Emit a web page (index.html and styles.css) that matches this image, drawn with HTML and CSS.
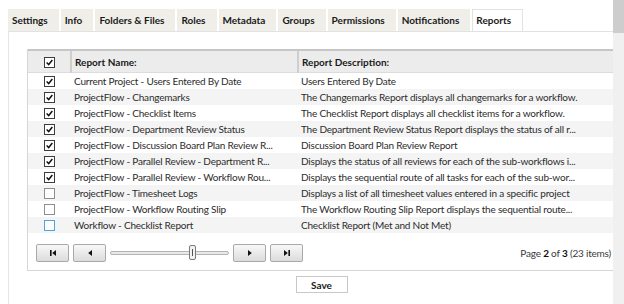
FILE: index.html
```html
<!DOCTYPE html>
<html lang="en">
<head>
    <meta charset="UTF-8">
    <title>Project Settings - Reports</title>
    <link rel="stylesheet" href="styles.css">
</head>
<body>
    <div class="window">
        <div class="main">
            <div class="tabs">
                <div class="tab">Settings</div>
                <div class="tab">Info</div>
                <div class="tab">Folders &amp; Files</div>
                <div class="tab">Roles</div>
                <div class="tab">Metadata</div>
                <div class="tab">Groups</div>
                <div class="tab">Permissions</div>
                <div class="tab">Notifications</div>
                <div class="tab active">Reports</div>
            </div>

            <div class="panel">
                <div class="grid">
                    <table>
                        <colgroup>
                            <col class="col-sel">
                            <col class="col-name">
                            <col>
                        </colgroup>
                        <thead>
                            <tr>
                                <th class="sel"><span class="cb checked"><svg viewBox="0 0 11 11"><polyline points="2,5.5 4.5,8 9,2.5"/></svg></span></th>
                                <th>Report Name:</th>
                                <th>Report Description:</th>
                            </tr>
                        </thead>
                        <tbody>
                            <tr>
                                <td class="sel"><span class="cb checked"><svg viewBox="0 0 11 11"><polyline points="2,5.5 4.5,8 9,2.5"/></svg></span></td>
                                <td>Current Project - Users Entered By Date</td>
                                <td>Users Entered By Date</td>
                            </tr>
                            <tr>
                                <td class="sel"><span class="cb checked"><svg viewBox="0 0 11 11"><polyline points="2,5.5 4.5,8 9,2.5"/></svg></span></td>
                                <td>ProjectFlow - Changemarks</td>
                                <td>The Changemarks Report displays all changemarks for a workflow.</td>
                            </tr>
                            <tr>
                                <td class="sel"><span class="cb checked"><svg viewBox="0 0 11 11"><polyline points="2,5.5 4.5,8 9,2.5"/></svg></span></td>
                                <td>ProjectFlow - Checklist Items</td>
                                <td>The Checklist Report displays all checklist items for a workflow.</td>
                            </tr>
                            <tr>
                                <td class="sel"><span class="cb checked"><svg viewBox="0 0 11 11"><polyline points="2,5.5 4.5,8 9,2.5"/></svg></span></td>
                                <td>ProjectFlow - Department Review Status</td>
                                <td>The Department Review Status Report displays the status of all r...</td>
                            </tr>
                            <tr>
                                <td class="sel"><span class="cb checked"><svg viewBox="0 0 11 11"><polyline points="2,5.5 4.5,8 9,2.5"/></svg></span></td>
                                <td>ProjectFlow - Discussion Board Plan Review R...</td>
                                <td>Discussion Board Plan Review Report</td>
                            </tr>
                            <tr>
                                <td class="sel"><span class="cb checked"><svg viewBox="0 0 11 11"><polyline points="2,5.5 4.5,8 9,2.5"/></svg></span></td>
                                <td>ProjectFlow - Parallel Review - Department R...</td>
                                <td>Displays the status of all reviews for each of the sub-workflows i...</td>
                            </tr>
                            <tr>
                                <td class="sel"><span class="cb checked"><svg viewBox="0 0 11 11"><polyline points="2,5.5 4.5,8 9,2.5"/></svg></span></td>
                                <td>ProjectFlow - Parallel Review - Workflow Rou...</td>
                                <td>Displays the sequential route of all tasks for each of the sub-wor...</td>
                            </tr>
                            <tr>
                                <td class="sel"><span class="cb"></span></td>
                                <td>ProjectFlow - Timesheet Logs</td>
                                <td>Displays a list of all timesheet values entered in a specific project</td>
                            </tr>
                            <tr>
                                <td class="sel"><span class="cb"></span></td>
                                <td>ProjectFlow - Workflow Routing Slip</td>
                                <td>The Workflow Routing Slip Report displays the sequential route...</td>
                            </tr>
                            <tr>
                                <td class="sel"><span class="cb focus"></span></td>
                                <td>Workflow - Checklist Report</td>
                                <td>Checklist Report (Met and Not Met)</td>
                            </tr>
                        </tbody>
                    </table>

                    <div class="pager">
                        <button class="pbtn" title="First"><svg viewBox="0 0 8 8"><rect x="1" y="1" width="1.6" height="6"/><polygon points="7,1 7,7 3.2,4"/></svg></button>
                        <button class="pbtn" title="Previous"><svg viewBox="0 0 8 8"><polygon points="6,1 6,7 2.2,4"/></svg></button>
                        <div class="slider">
                            <div class="track"></div>
                            <div class="thumb"></div>
                        </div>
                        <button class="pbtn" title="Next"><svg viewBox="0 0 8 8"><polygon points="2,1 2,7 5.8,4"/></svg></button>
                        <button class="pbtn" title="Last"><svg viewBox="0 0 8 8"><polygon points="1,1 1,7 4.8,4"/><rect x="5.4" y="1" width="1.6" height="6"/></svg></button>
                        <div class="page-info">Page <b>2</b> of <b>3</b> (23 items)</div>
                    </div>
                </div>

                <div class="actions">
                    <button class="save">Save</button>
                </div>
            </div>
        </div>
        <div class="scrollbar"><div class="scroll-thumb"></div></div>
    </div>
</body>
</html>
```

FILE: styles.css
```css
body {
    margin: 0;
    font-family: 'Lato', 'Noto Sans', sans-serif;
    font-size: 10px;
    letter-spacing: -0.2px;
    color: #2c2c2c;
    background-color: #fff;
}
.window {
    display: flex;
    height: 304px;
    overflow: hidden;
}
.main {
    flex: 1;
    min-width: 0;
    overflow: hidden;
}
.scrollbar {
    width: 11px;
    background-color: #f0f0f0;
}
.scroll-thumb {
    height: 33px;
    background-color: #cdcdcd;
}

/* tabs */
.tabs {
    display: flex;
    gap: 2px;
    padding: 9px 0 0 8px;
}
.tab {
    height: 22px;
    line-height: 22px;
    padding: 0 11px 0 4px;
    background-color: #efeee9;
    font-weight: bold;
    letter-spacing: 0;
    color: #1a1a1a;
    white-space: nowrap;
}
.tab.active {
    background-color: #fff;
    border: 1px solid #e2e2e2;
    border-bottom: none;
    height: 21px;
    line-height: 20px;
    padding: 0 11px 0 3px;
}
.panel {
    margin-left: 8px;
    border-left: 1px solid #e6e6e6;
    border-top: 1px solid #e2e2e2;
    padding: 17px 0 0 18px;
    height: 300px;
}

/* grid */
.grid {
    width: 591px;
    border-left: 1px solid #d6d6d6;
    border-bottom: 1px solid #d6d6d6;
}
table {
    width: 100%;
    border-collapse: collapse;
    table-layout: fixed;
}
.col-sel {
    width: 43px;
}
.col-name {
    width: 227px;
}
th {
    height: 21px;
    padding: 0 3px;
    background-color: #ececec;
    border-top: 2px solid #c6c6c6;
    border-bottom: 1px solid #dcdcdc;
    text-align: left;
    font-weight: bold;
    letter-spacing: 0;
    color: #1a1a1a;
}
th + th {
    border-left: 2px solid #cfcfcf;
}
td {
    height: 16px;
    padding: 0 3px;
    white-space: nowrap;
    overflow: hidden;
    text-overflow: ellipsis;
    line-height: 15px;
}
tbody tr:nth-child(even) td {
    background-color: #f4f4f4;
}
.sel {
    text-align: center;
    padding: 0;
}
.cb {
    display: inline-block;
    width: 11px;
    height: 11px;
    box-sizing: border-box;
    border: 1px solid #8e8e8e;
    background-color: #fff;
    vertical-align: middle;
}
.cb.checked {
    border-color: #3c3c3c;
}
.cb.focus {
    border-color: #48a6e6;
}
.cb svg {
    display: block;
    width: 9px;
    height: 9px;
}
.cb polyline {
    fill: none;
    stroke: #111;
    stroke-width: 1.8;
}

/* pager */
.pager {
    display: flex;
    align-items: center;
    gap: 4px;
    padding: 11px 8px 8px 8px;
}
.pbtn {
    width: 33px;
    height: 18px;
    padding: 0;
    border: 1px solid #a9a9a9;
    border-radius: 2px;
    background: linear-gradient(#f8f8f8, #dcdcdc);
    display: flex;
    align-items: center;
    justify-content: center;
}
.pbtn svg {
    width: 8px;
    height: 8px;
    fill: #111;
}
.slider {
    width: 119px;
    height: 18px;
    position: relative;
}
.track {
    position: absolute;
    left: 0;
    right: 0;
    top: 7px;
    height: 2px;
    border: 1px solid #b4b4b4;
    border-radius: 2px;
    background-color: #e9e9e9;
}
.thumb {
    position: absolute;
    left: 79px;
    top: 1px;
    width: 5px;
    height: 13px;
    border: 1px solid #7c7c7c;
    border-radius: 2px;
    background: linear-gradient(90deg, #f2f2f2 40%, #555 40%, #555 60%, #f2f2f2 60%);
    background-size: 100% 7px;
    background-position: center;
    background-repeat: no-repeat;
    background-color: #f2f2f2;
}
.page-info {
    margin-left: auto;
    color: #3a3a3a;
}
.page-info b {
    color: #111;
}

/* save */
.actions {
    width: 589px;
    display: flex;
    justify-content: center;
    padding-top: 5px;
}
.save {
    width: 52px;
    height: 17px;
    padding: 0;
    border: 1px solid #c8c8c8;
    background-color: #fff;
    font-family: inherit;
    font-size: 10px;
    font-weight: bold;
    color: #1a1a1a;
}
```
